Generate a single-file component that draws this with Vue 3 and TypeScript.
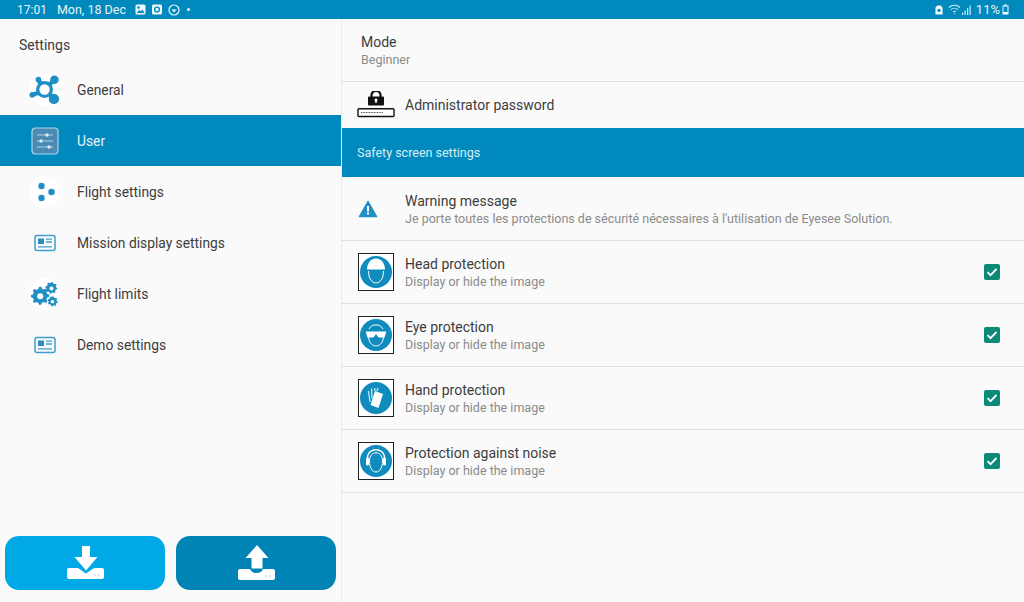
<template>
  <div class="screen">
    <header class="status">
      <div class="status-left">
        <span class="time">17:01</span>
        <span class="date">Mon, 18 Dec</span>
        <svg class="st-icon" width="11" height="11" viewBox="0 0 11 11">
          <rect x="0.5" y="0.5" width="10" height="10" rx="1.5" fill="#eef7fb" />
          <circle cx="3.5" cy="3.5" r="1.2" fill="#0089bd" />
          <path d="M1.5 9l3-3 1.5 1.5 1.5-2 2 3.500z" fill="#0089bd" />
        </svg>
        <svg class="st-icon" width="10" height="11" viewBox="0 0 10 11">
          <rect x="0" y="0.5" width="10" height="10" rx="1.500" fill="#eef7fb" />
          <circle cx="5" cy="5.500" r="2.400" fill="none" stroke="#0089bd" stroke-width="1.400" />
        </svg>
        <svg class="st-icon" width="12" height="12" viewBox="0 0 12 12">
          <circle cx="6" cy="6" r="5" fill="none" stroke="#eef7fb" stroke-width="1.200" />
          <path d="M3.500 5.500h5L6 8.500z" fill="#eef7fb" />
        </svg>
        <span class="dot"></span>
      </div>
      <div class="status-right">
        <svg width="8" height="10" viewBox="0 0 9 11">
          <path d="M2.500 0.500h4l2 2.500v7.500H0.500V3z" fill="#eef7fb" />
          <circle cx="4.500" cy="6" r="1.800" fill="#0089bd" />
        </svg>
        <svg class="wifi" width="13" height="11" viewBox="0 0 13 11" fill="none" stroke="#d6ecf5" stroke-width="1.100">
          <path d="M1 3.500c3-3 8-3 11 0M3 5.700c2-1.900 5-1.900 7 0M5 7.800c1-.8 2-.8 3 0" />
          <circle cx="6.500" cy="9.600" r="0.700" fill="#d6ecf5" stroke="none" />
        </svg>
        <svg class="signal" width="9" height="10" viewBox="0 0 9 10" fill="#cfe8f2">
          <rect x="0" y="7.500" width="1.200" height="2.500" />
          <rect x="2.500" y="5.500" width="1.200" height="4.500" />
          <rect x="5" y="3" width="1.200" height="7" />
          <rect x="7.500" y="0.500" width="1.200" height="9.500" />
        </svg>
        <span class="battery-text">11%</span>
        <svg width="7" height="11" viewBox="0 0 7 11">
          <path d="M2.200 0.500h2.600v1H6.500v9H0.500v-9h1.700z" fill="#eef7fb" />
          <rect x="1.500" y="2.500" width="4" height="5.500" fill="#0089bd" />
        </svg>
      </div>
    </header>

    <div class="body">
      <aside class="sidebar">
        <h2 class="sidebar-title">Settings</h2>
        <nav class="menu">
          <div v-for="item in menu" :key="item.label" class="menu-item" :class="{ active: item.label === 'User' }">
            <span class="menu-icon" :class="{ halo: item.halo }">
              <svg v-if="item.icon === 'network'" width="34" height="34" viewBox="0 0 34 34">
                <g stroke="#1f8fc4" fill="none">
                  <path d="M10 6l5 9M27 6l-9 9M4 22l11-4M27 26l-9-8" stroke-width="4.500" />
                </g>
                <circle cx="16.500" cy="16.500" r="9" fill="#1f8fc4" />
                <circle cx="16.500" cy="16.500" r="5.500" fill="#fff" />
                <circle cx="10" cy="6" r="3" fill="#1f8fc4" />
                <circle cx="27" cy="6" r="4.500" fill="#1f8fc4" />
                <circle cx="3.500" cy="22" r="3" fill="#1f8fc4" />
                <circle cx="26.500" cy="26.500" r="5.500" fill="#1f8fc4" />
              </svg>
              <svg v-else-if="item.icon === 'sliders'" width="28" height="28" viewBox="0 0 28 28">
                <rect x="1" y="1" width="26" height="26" rx="3.500" fill="#4a8ab5" stroke="#a9d8ea" stroke-width="1.200" />
                <g stroke="#b9dcea" stroke-width="0.900">
                  <path d="M6 8h16M6 14h16M6 20h16" />
                </g>
                <circle cx="16" cy="8" r="1.700" fill="#dcedf5" />
                <circle cx="10" cy="14" r="1.700" fill="#dcedf5" />
                <circle cx="18" cy="20" r="1.700" fill="#dcedf5" />
              </svg>
              <svg v-else-if="item.icon === 'dots'" width="24" height="24" viewBox="0 0 24 24" fill="#1f8fc4">
                <circle cx="8.500" cy="6" r="3.200" />
                <circle cx="18.500" cy="12" r="3.200" />
                <circle cx="8.500" cy="18" r="3.200" />
              </svg>
              <svg v-else-if="item.icon === 'card'" width="22" height="18" viewBox="0 0 22 18">
                <rect x="1" y="1.500" width="20" height="15" rx="2" fill="none" stroke="#3f9fcb" stroke-width="1.500" />
                <rect x="4" y="4.500" width="6" height="5.500" fill="#2a8fc0" />
                <path d="M12 5.200h6M12 8h6M4 12.800h14" stroke="#3f9fcb" stroke-width="1.300" />
              </svg>
              <svg v-else width="28" height="26" viewBox="0 0 28 26" fill="#1f8fc4">
                <path d="M8 6l2.200-.4.700 2 2 .8 1.900-1 1.600 1.600-1 1.900.8 2 2 .7v2.200l-2 .7-.8 2 1 1.900-1.600 1.600-1.900-1-2 .8-.7 2H8l-.7-2-2-.8-1.900 1L1.800 20.900l1-1.900-.8-2-2-.7v-2.200l2-.7.8-2-1-1.900 1.600-1.600 1.900 1 2-.8z" fill-rule="evenodd" />
                <circle cx="9.200" cy="15.200" r="3" fill="#fff" />
                <path d="M20.500 1l1.500.3.300 1.300 1.100.6 1.300-.5 1 1.200-.8 1.100.2 1.300 1.200.7-.3 1.500-1.300.3-.7 1.100.5 1.300-1.200 1-1.100-.8-1.300.2-.7 1.200-1.500-.3-.3-1.300-1.100-.7-1.300.5-1-1.200.8-1.100-.2-1.300-1.200-.7.300-1.500 1.300-.3.700-1.100-.5-1.300 1.200-1 1.100.8 1.300-.2z" />
                <circle cx="20.500" cy="7.500" r="2" fill="#fff" />
                <path d="M21.500 15.500l1.400.2.300 1.100 1 .5 1.100-.5.900 1-.7 1 .2 1.200 1 .6-.2 1.400-1.200.3-.6 1 .4 1.100-1.100.7-.9-.8-1.200.1-.7 1-1.300-.4-.1-1.200-1-.7-1.200.3-.7-1.100.8-.9-.1-1.200-1-.7.400-1.300 1.200-.1.700-1 -.3-1.200z" />
                <circle cx="21.500" cy="20.800" r="1.800" fill="#fff" />
              </svg>
            </span>
            <span class="menu-label">{{ item.label }}</span>
          </div>
        </nav>
        <div class="actions">
          <button class="action light">
            <svg width="38" height="36" viewBox="0 0 38 36">
              <path d="M16 1h8v11h7.500L20 25.500 8.500 12H16z" fill="#fff" />
              <path d="M3 23h9l8 5.500 8-5.500h8a2 2 0 0 1 2 2v7a2 2 0 0 1-2 2H3a2 2 0 0 1-2-2v-7a2 2 0 0 1 2-2z" fill="#fff" />
              <circle cx="29" cy="30" r="0.900" fill="#bfe6f6" />
              <circle cx="33" cy="30" r="0.900" fill="#bfe6f6" />
            </svg>
          </button>
          <button class="action dark">
            <svg width="38" height="36" viewBox="0 0 38 36">
              <path d="M20 0l11.500 13H25.500v10.500h-11V13H8.500z" fill="#fff" />
              <path d="M3 24h10c1 2.500 3 4 6.500 4s5.500-1.500 6.500-4h10a2 2 0 0 1 2 2v7a2 2 0 0 1-2 2H3a2 2 0 0 1-2-2v-7a2 2 0 0 1 2-2z" fill="#fff" />
              <circle cx="29" cy="31" r="0.900" fill="#b5dbe9" />
              <circle cx="33" cy="31" r="0.900" fill="#b5dbe9" />
            </svg>
          </button>
        </div>
      </aside>

      <main class="content">
        <section class="row mode">
          <div class="row-title">Mode</div>
          <div class="row-sub">Beginner</div>
        </section>
        <section class="row admin">
          <span class="row-icon">
            <svg width="38" height="28" viewBox="0 1 38 28">
              <path d="M14.500 7V5a4.500 4 0 0 1 9 0v2" fill="none" stroke="#111" stroke-width="2.200" />
              <rect x="11" y="6.500" width="16" height="9" rx="1" fill="#111" />
              <circle cx="19" cy="10" r="1.500" fill="#fff" />
              <rect x="18.300" y="10" width="1.400" height="3" fill="#fff" />
              <rect x="1" y="18.700" width="36" height="7.800" rx="1" fill="#fff" stroke="#111" stroke-width="1.400" />
              <path d="M4 22.500h22" stroke="#555" stroke-width="1.200" stroke-dasharray="1 0.600" />
            </svg>
          </span>
          <span class="row-title">Administrator password</span>
        </section>
        <section class="section-head">Safety screen settings</section>
        <section class="row warning">
          <span class="row-icon">
            <svg width="20" height="18" viewBox="0 0 20 18">
              <path d="M10 1.500L18.500 16.500H1.500z" fill="#1f8fc4" stroke="#1f8fc4" stroke-width="1.500" stroke-linejoin="round" />
              <rect x="9" y="6" width="2" height="5.500" fill="#fff" />
              <rect x="9" y="12.500" width="2" height="2" fill="#fff" />
            </svg>
          </span>
          <div class="text-block">
            <div class="row-title">Warning message</div>
            <div class="row-sub">Je porte toutes les protections de sécurité nécessaires à l'utilisation de Eyesee Solution.</div>
          </div>
        </section>
        <section v-for="p in protections" :key="p.title" class="row safety">
          <span class="row-icon">
            <span class="sign">
              <svg width="32" height="32" viewBox="0 0 32 32">
                <circle cx="16" cy="16" r="16" fill="#0f8cbd" />
                <template v-if="p.kind === 'head'">
                  <path d="M7 13.500C7 7 11 2.500 16 2.500S25 7 25 13.500z" fill="#fff" />
                  <path d="M8.500 15c0 7.500 3.500 12 7.500 12s7.500-4.500 7.500-12" fill="none" stroke="#fff" stroke-width="1" />
                </template>
                <template v-else-if="p.kind === 'eye'">
                  <path d="M8.500 17c0 6 3.500 10 7.500 10s7.500-4 7.500-10M9 10a8 8 0 0 1 14 0" fill="none" stroke="#fff" stroke-width="1" />
                  <path d="M6 12.500h20v1.500l-1.500 4.500h-6L16 15l-2.500 3.500h-6L6 14z" fill="#fff" />
                </template>
                <template v-else-if="p.kind === 'hand'">
                  <path d="M15 9l8 3-4.500 14-8-3z" fill="#fff" />
                  <path d="M10 20L8.500 9M12 16.500L11.500 6.500M14.500 9l.5-3M17 9l1-3" stroke="#cfe8f2" stroke-width="1.300" fill="none" />
                </template>
                <template v-else>
                  <path d="M9.500 16c0-11 13-11 13 0 0 7-3 11-6.500 11s-6.500-4-6.500-11z" fill="none" stroke="#fff" stroke-width="1" />
                  <path d="M7.500 13C7.500 2 24.500 2 24.500 13" fill="none" stroke="#fff" stroke-width="1.400" />
                  <rect x="6" y="12.500" width="3" height="8" rx="1.500" fill="#fff" />
                  <rect x="23" y="12.500" width="3" height="8" rx="1.500" fill="#fff" />
                </template>
              </svg>
            </span>
          </span>
          <div class="text-block safety-text">
            <div class="row-title">{{ p.title }}</div>
            <div class="row-sub">Display or hide the image</div>
          </div>
          <span class="check">
            <svg width="16" height="16" viewBox="0 0 16 16">
              <rect width="16" height="16" rx="2" fill="#0b8a78" />
              <path d="M3.500 8.200l3 3 6-6.200" fill="none" stroke="#fff" stroke-width="1.800" />
            </svg>
          </span>
        </section>
      </main>
    </div>
  </div>
</template>

<script setup lang="ts">
type MenuIcon = 'network' | 'sliders' | 'dots' | 'card' | 'gears'

const menu: { label: string; icon: MenuIcon; halo?: boolean }[] = [
  { label: 'General', icon: 'network', halo: true },
  { label: 'User', icon: 'sliders' },
  { label: 'Flight settings', icon: 'dots', halo: true },
  { label: 'Mission display settings', icon: 'card' },
  { label: 'Flight limits', icon: 'gears', halo: true },
  { label: 'Demo settings', icon: 'card' },
]

const protections = [
  { title: 'Head protection', kind: 'head' },
  { title: 'Eye protection', kind: 'eye' },
  { title: 'Hand protection', kind: 'hand' },
  { title: 'Protection against noise', kind: 'noise' },
]
</script>

<style scoped>
.screen {
  width: 1024px;
  height: 602px;
  display: flex;
  flex-direction: column;
  background: #fafafa;
  font-family: Roboto, "Liberation Sans", sans-serif;
  color: #3d3d3d;
  overflow: hidden;
}

.status {
  height: 19px;
  flex: none;
  background: #0089bd;
  color: #e6f4fa;
  font-size: 12px;
  display: flex;
  justify-content: space-between;
  align-items: center;
  padding: 0 15px 0 17px;
}
.status-left,
.status-right {
  display: flex;
  align-items: center;
}
.date {
  font-size: 12.5px;
  margin-left: 10px;
  margin-right: 9px;
}
.st-icon {
  margin-right: 6px;
}
.dot {
  width: 3px;
  height: 3px;
  border-radius: 50%;
  background: #e6f4fa;
  margin-left: 1px;
}
.wifi {
  margin-left: 5px;
}
.signal {
  margin-left: 1px;
}
.battery-text {
  font-size: 13px;
  margin: 0 2px 0 5px;
}

.body {
  flex: 1;
  display: flex;
  min-height: 0;
}

.sidebar {
  width: 341px;
  flex: none;
  display: flex;
  flex-direction: column;
  border-right: 1px solid #ececec;
}
.sidebar-title {
  margin: 0;
  height: 45px;
  padding: 18px 0 0 19px;
  box-sizing: border-box;
  font-size: 14px;
  font-weight: 400;
  line-height: 17px;
}

.menu-item {
  height: 51px;
  display: flex;
  align-items: center;
  font-size: 13.8px;
}
.menu-item.active {
  background: #0089bd;
  color: #e6f4fa;
}
.menu-icon {
  width: 32px;
  height: 32px;
  margin: 0 16px 0 29px;
  display: flex;
  align-items: center;
  justify-content: center;
  border-radius: 50%;
}
.menu-icon.halo {
  background: #fff;
}
.menu-label {
  padding-top: 1px;
}

.actions {
  margin-top: auto;
  display: flex;
  gap: 11px;
  padding: 0 5px 12px;
}
.action {
  width: 160px;
  height: 54px;
  border: 0;
  padding: 0;
  border-radius: 14px;
  display: flex;
  align-items: center;
  justify-content: center;
}
.action.light {
  background: #00a8e6;
}
.action.dark {
  background: #0084b6;
}

.content {
  flex: 1;
  min-width: 0;
}
.row {
  display: flex;
  align-items: center;
  border-bottom: 1px solid #dfdfdf;
  box-sizing: border-box;
}
.row-title {
  font-size: 14px;
  line-height: 18px;
  color: #3d3d3d;
}
.row-sub {
  font-size: 12.5px;
  line-height: 18px;
  color: #8a8a8a;
}
.row-icon {
  width: 48px;
  margin-left: 15px;
  flex: none;
  display: flex;
  align-items: center;
}
.text-block {
  padding-top: 2px;
}

.mode {
  height: 63px;
  flex-direction: column;
  align-items: flex-start;
  justify-content: center;
  padding: 1px 0 0 19px;
}
.admin {
  height: 46px;
  border-bottom: 0;
}
.section-head {
  height: 49px;
  display: flex;
  align-items: center;
  padding-left: 15px;
  background: #0089bd;
  color: #d9eef6;
  font-size: 12.5px;
}
.warning {
  height: 64px;
}
.warning .row-icon {
  margin-left: 16px;
  width: 47px;
}
.safety {
  height: 63px;
}
.sign {
  width: 36px;
  height: 38px;
  box-sizing: border-box;
  border: 1px solid #222;
  background: #fff;
  display: flex;
  align-items: center;
  justify-content: center;
  margin-left: 1px;
}
.safety-text {
  flex: 1;
}
.check {
  display: flex;
  margin-right: 24px;
}
</style>

<style>
html,
body {
  background: #fafafa;
}
</style>
